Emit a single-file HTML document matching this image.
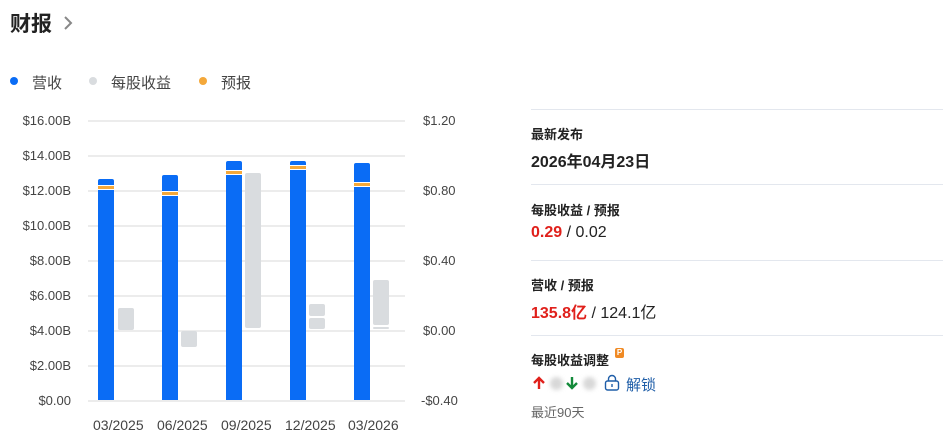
<!DOCTYPE html><html><head><meta charset="utf-8"><style>
body{margin:0;width:943px;height:433px;background:#fff;position:relative;overflow:hidden;font-family:"Liberation Sans","Noto Sans CJK SC",sans-serif;color:#222}
.a{position:absolute;white-space:nowrap}
.g{position:absolute;left:88px;width:317px;height:2px;background:#ececec}
.yl{position:absolute;right:872px;font-size:13px;color:#444;text-align:right}
.yr{position:absolute;left:423px;font-size:13px;color:#444}
.b{position:absolute;background:#0a6cf5;width:16px;border-radius:2px 2px 0 0}
.o{position:absolute;width:16px;height:3px;background:#f4a83a;border-top:1px solid #fff;border-bottom:1px solid #fff}
.s{position:absolute;background:#d9dcdf;width:16px;border-radius:2px}
.x{position:absolute;top:417px;font-size:14px;color:#444}
.hr{position:absolute;left:531px;width:412px;height:1px;background:#e3e7ee}
.lb{font-size:13px;font-weight:bold;color:#222}
.v{font-size:16px}
</style></head><body>
<div class="a" style="left:10px;top:8px;font-size:21px;font-weight:bold">财报</div>
<svg class="a" style="left:62px;top:15px" width="12" height="16"><path d="M3 2 L9 8 L3 14" stroke="#888" stroke-width="2" fill="none"/></svg>
<div class="a" style="left:10px;top:77px;width:8px;height:8px;border-radius:50%;background:#0a6cf5"></div>
<div class="a" style="left:32px;top:72px;font-size:15px;color:#444">营收</div>
<div class="a" style="left:89px;top:77px;width:8px;height:8px;border-radius:50%;background:#d9dcdf"></div>
<div class="a" style="left:111px;top:72px;font-size:15px;color:#444">每股收益</div>
<div class="a" style="left:199px;top:77px;width:8px;height:8px;border-radius:50%;background:#f4a83a"></div>
<div class="a" style="left:221px;top:72px;font-size:15px;color:#444">预报</div>

<div class="g" style="top:120px"></div><div class="g" style="top:155px"></div><div class="g" style="top:190px"></div><div class="g" style="top:225px"></div><div class="g" style="top:260px"></div><div class="g" style="top:295px"></div><div class="g" style="top:330px"></div><div class="g" style="top:365px"></div><div class="g" style="top:400px"></div>
<div class="yl" style="top:113px">$16.00B</div><div class="yl" style="top:148px">$14.00B</div><div class="yl" style="top:183px">$12.00B</div><div class="yl" style="top:218px">$10.00B</div><div class="yl" style="top:253px">$8.00B</div><div class="yl" style="top:288px">$6.00B</div><div class="yl" style="top:323px">$4.00B</div><div class="yl" style="top:358px">$2.00B</div><div class="yl" style="top:393px">$0.00</div>
<div class="yr" style="top:113px">$1.20</div><div class="yr" style="top:183px">$0.80</div><div class="yr" style="top:253px">$0.40</div><div class="yr" style="top:323px">$0.00</div><div class="yr" style="top:393px;left:421px">-$0.40</div>

<div class="b" style="left:98px;top:179px;height:221px"></div><div class="o" style="left:98px;top:185px"></div>
<div class="s" style="left:118px;top:308px;height:22px"></div>
<div class="b" style="left:162px;top:175px;height:225px"></div><div class="o" style="left:162px;top:191px"></div>
<div class="s" style="left:181px;top:331px;height:16px"></div>
<div class="b" style="left:226px;top:161px;height:239px"></div><div class="o" style="left:226px;top:170px"></div>
<div class="s" style="left:245px;top:173px;height:155px"></div>
<div class="b" style="left:290px;top:161px;height:239px"></div><div class="o" style="left:290px;top:165px"></div>
<div class="s" style="left:309px;top:304px;height:12px"></div><div class="s" style="left:309px;top:318px;height:11px"></div>
<div class="b" style="left:354px;top:163px;height:237px"></div><div class="o" style="left:354px;top:182px"></div>
<div class="s" style="left:373px;top:280px;height:45px"></div><div class="s" style="left:373px;top:327px;height:2px"></div>

<div class="x" style="left:93px">03/2025</div><div class="x" style="left:157px">06/2025</div><div class="x" style="left:221px">09/2025</div><div class="x" style="left:285px">12/2025</div><div class="x" style="left:348px">03/2026</div>

<div class="hr" style="top:109px"></div><div class="hr" style="top:184px"></div><div class="hr" style="top:260px"></div><div class="hr" style="top:335px"></div>
<div class="a lb" style="left:531px;top:124px">最新发布</div>
<div class="a" style="left:531px;top:148px;font-size:16px;font-weight:bold">2026年04月23日</div>
<div class="a lb" style="left:531px;top:200px">每股收益 / 预报</div>
<div class="a v" style="left:531px;top:224px"><b style="color:#e0201b">0.29</b> / 0.02</div>
<div class="a lb" style="left:531px;top:275px">营收 / 预报</div>
<div class="a v" style="left:531px;top:299px"><b style="color:#e0201b">135.8亿</b> / 124.1亿</div>
<div class="a lb" style="left:531px;top:350px">每股收益调整</div>
<div class="a" style="left:615px;top:348px;width:9px;height:10px;background:#f08a24;border-radius:2px;color:#fff;font-size:8px;line-height:10px;text-align:center;font-weight:bold">P</div>
<svg class="a" style="left:532px;top:376px" width="14" height="14"><path d="M7 13V2M2 7L7 2L12 7" stroke="#e0201b" stroke-width="2.4" fill="none"/></svg>
<div class="a" style="left:550px;top:377px;width:13px;height:13px;border-radius:50%;background:#d8d8d8;filter:blur(2px)"></div>
<svg class="a" style="left:565px;top:376px" width="14" height="14"><path d="M7 1V12M2 7L7 12L12 7" stroke="#138a3a" stroke-width="2.4" fill="none"/></svg>
<div class="a" style="left:583px;top:377px;width:13px;height:13px;border-radius:50%;background:#d8d8d8;filter:blur(2px)"></div>
<svg class="a" style="left:604px;top:374px" width="16" height="17"><rect x="1.5" y="7" width="13" height="9" rx="2" fill="none" stroke="#1f5ea8" stroke-width="1.4"/><path d="M4.5 7V5a3.5 3.5 0 0 1 7 0V7" fill="none" stroke="#1f5ea8" stroke-width="1.4"/><rect x="7.3" y="10" width="1.4" height="3" fill="#1f5ea8"/></svg>
<div class="a" style="left:626px;top:374px;font-size:15px;color:#1f5ea8">解锁</div>
<div class="a" style="left:531px;top:402px;font-size:13px;color:#666">最近90天</div>
</body></html>
